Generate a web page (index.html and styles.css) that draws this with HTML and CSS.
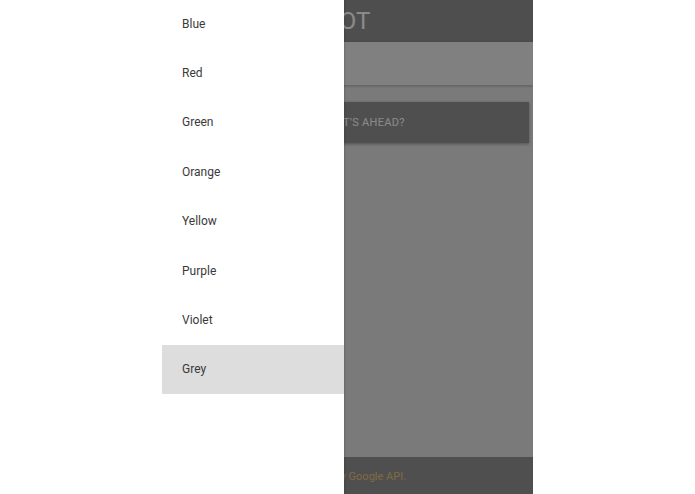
FILE: index.html
```html
<!DOCTYPE html>
<html>
<head>
<meta charset="utf-8">
<link rel="stylesheet" href="styles.css">
</head>
<body>
<div class="app">
  <header class="topbar"><span class="title">BOT</span></header>
  <div class="band"></div>
  <main class="content">
    <div class="card">WHAT'S AHEAD?</div>
  </main>
  <footer class="footer">Powered by Google API.</footer>
  <div class="overlay"></div>
  <nav class="drawer">
    <ul class="menu">
      <li class="item">Blue</li>
      <li class="item">Red</li>
      <li class="item">Green</li>
      <li class="item">Orange</li>
      <li class="item">Yellow</li>
      <li class="item">Purple</li>
      <li class="item">Violet</li>
      <li class="item active">Grey</li>
    </ul>
  </nav>
</div>
</body>
</html>
```
FILE: styles.css
```css
html, body {
  margin: 0;
  padding: 0;
  background: #ffffff;
  font-family: Roboto, "Liberation Sans", sans-serif;
}
.app {
  position: relative;
  width: 371px;
  height: 494px;
  margin: 0 auto;
  display: flex;
  flex-direction: column;
  background: #e2e2e2;
  overflow: hidden;
}
.topbar {
  height: 42px;
  flex: none;
  background: #919191;
  display: flex;
  align-items: center;
  justify-content: center;
}
.title {
  color: #ffffff;
  font-size: 24px;
}
.band {
  height: 43px;
  flex: none;
  background: #ececec;
  box-shadow: 0 1px 3px rgba(0,0,0,0.25);
}
.content {
  flex: 1;
  padding: 17px 4px 0 4px;
}
.card {
  height: 41px;
  background: #939393;
  box-shadow: 0 1px 3px rgba(0,0,0,0.35);
  color: #ffffff;
  font-size: 11px;
  letter-spacing: 0.3px;
  display: flex;
  align-items: center;
  padding-left: 152px;
}
.footer {
  height: 37px;
  flex: none;
  background: #939393;
  color: #e6c57e;
  font-size: 11px;
  display: flex;
  align-items: center;
  justify-content: center;
  padding-top: 2px;
  box-sizing: border-box;
}
.overlay {
  position: absolute;
  inset: 0;
  background: rgba(0,0,0,0.46);
}
.drawer {
  position: absolute;
  top: 0;
  left: 0;
  bottom: 0;
  width: 182px;
  background: #ffffff;
  box-shadow: 1px 0 2px rgba(0,0,0,0.15);
}
.menu {
  list-style: none;
  margin: -1px 0 0 0;
  padding: 0;
}
.item {
  height: 49.4px;
  display: flex;
  align-items: center;
  padding-left: 20px;
  font-size: 12px;
  color: #3a3a3a;
}
.item.active {
  background: #dddddd;
}
```
